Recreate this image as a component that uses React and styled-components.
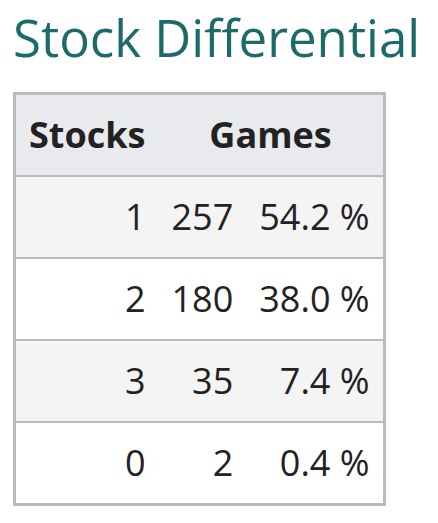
import styled, { createGlobalStyle } from "styled-components";

const GlobalStyle = createGlobalStyle`
  body {
    margin: 0;
    background: #fff;
    font-family: "Open Sans", "Noto Sans", sans-serif;
    color: #222;
  }
`;

const Page = styled.div`
  padding: 0 13px;
`;

const Title = styled.h2`
  margin: 0;
  padding-top: 3px;
  font-size: 51px;
  font-weight: 400;
  line-height: 68px;
  color: #1b6b6b;
`;

const Table = styled.table`
  margin-top: 21px;
  border-collapse: collapse;
  border: 3px solid #bbbbbb;
  font-size: 36px;
`;

const HeadRow = styled.tr`
  background: #e9eaee;
`;

const Row = styled.tr`
  background: ${(p) => (p.$odd ? "#f4f4f4" : "#ffffff")};
  border-top: 2.5px solid #bbbbbb;
`;

const HeadCell = styled.th`
  padding: 14px 13px;
  font-weight: 700;
  line-height: 52px;
  text-align: ${(p) => p.$align || "left"};
`;

const Cell = styled.td`
  padding: 14px 13px;
  line-height: 52px;
  text-align: right;
  white-space: nowrap;
`;

const rows = [
  { stocks: 1, games: 257, pct: "54.2 %" },
  { stocks: 2, games: 180, pct: "38.0 %" },
  { stocks: 3, games: 35, pct: "7.4 %" },
  { stocks: 0, games: 2, pct: "0.4 %" },
];

const App = () => {
  return (
    <Page>
      <GlobalStyle />
      <Title>Stock Differential</Title>
      <Table>
        <thead>
          <HeadRow>
            <HeadCell>Stocks</HeadCell>
            <HeadCell colSpan={2} $align="center">
              Games
            </HeadCell>
          </HeadRow>
        </thead>
        <tbody>
          {rows.map((r, i) => (
            <Row key={r.stocks} $odd={i % 2 === 0}>
              <Cell>{r.stocks}</Cell>
              <Cell>{r.games}</Cell>
              <Cell>{r.pct}</Cell>
            </Row>
          ))}
        </tbody>
      </Table>
    </Page>
  );
};

export default App;
